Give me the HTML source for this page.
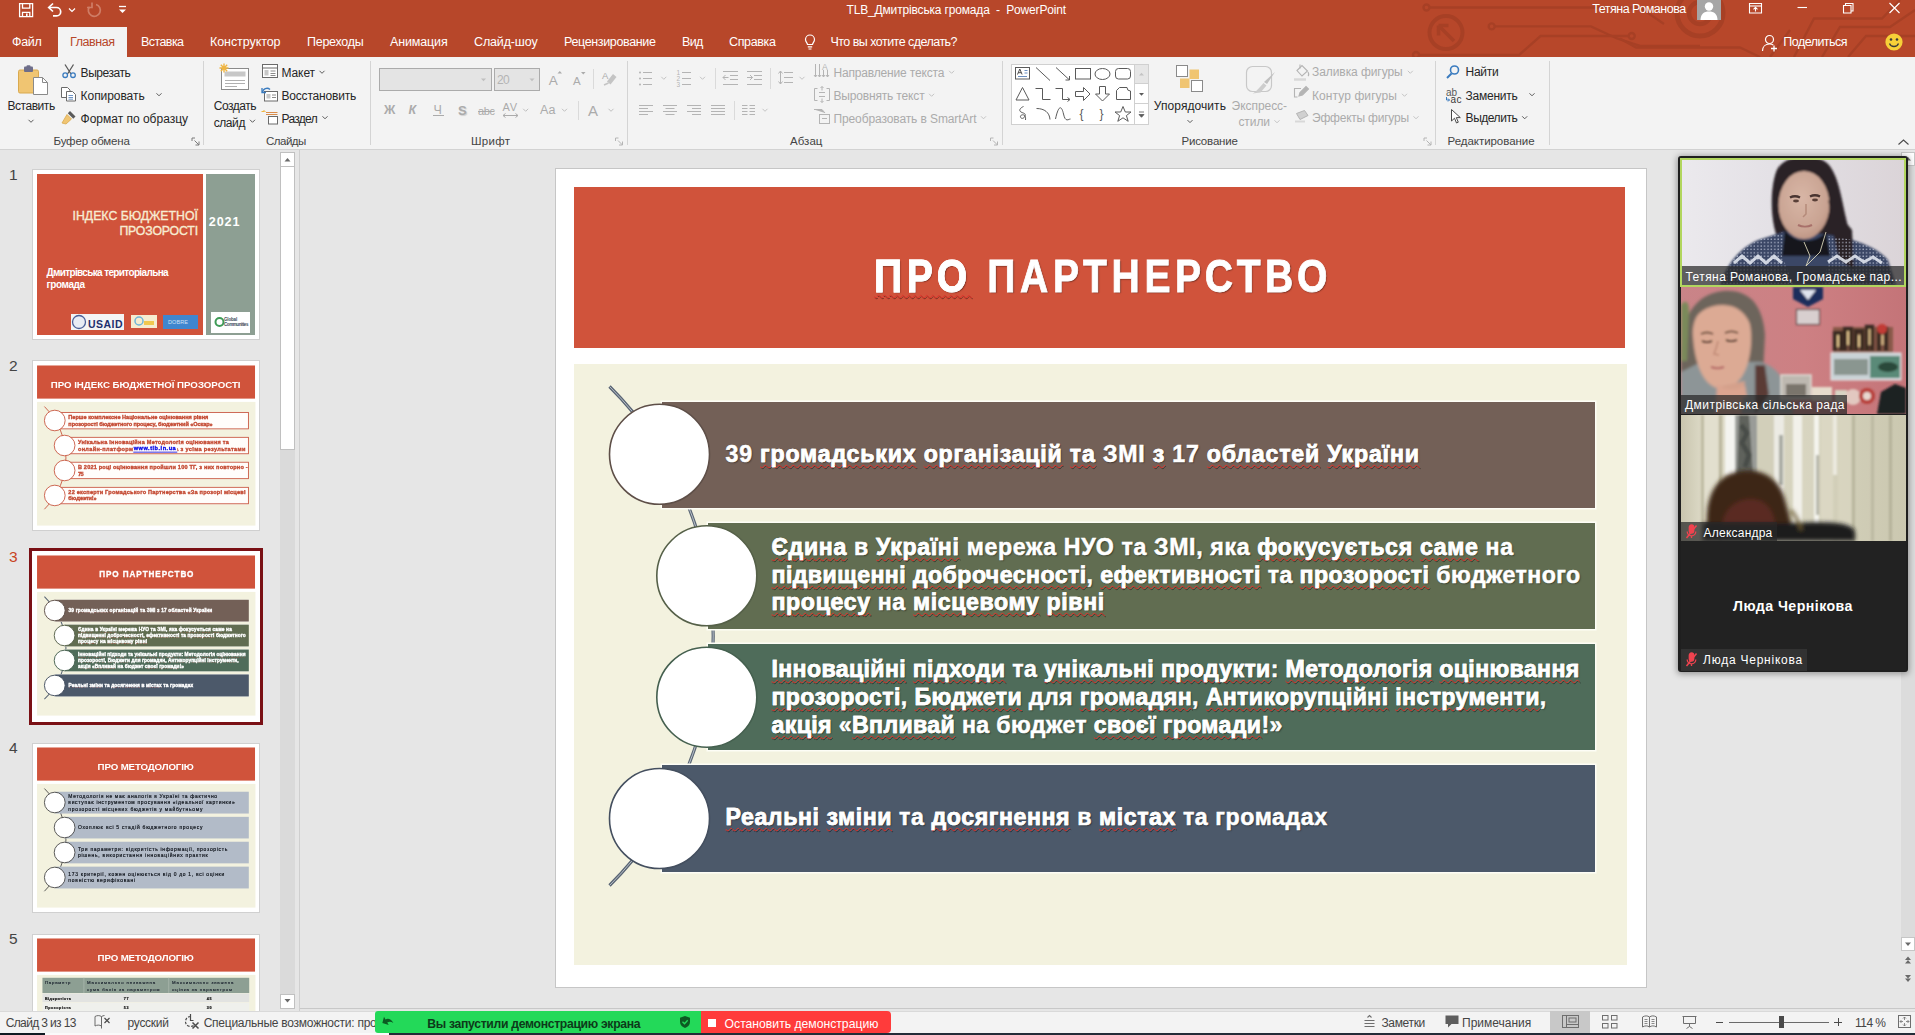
<!DOCTYPE html>
<html lang="ru">
<head>
<meta charset="utf-8">
<title>TLB_Дмитрівська громада - PowerPoint</title>
<style>
*{box-sizing:border-box;margin:0;padding:0}
html,body{width:1915px;height:1035px;overflow:hidden;background:#e6e6e6;font-family:"Liberation Sans","DejaVu Sans",sans-serif;}
.a{position:absolute;white-space:nowrap}
svg.a{overflow:visible}
#app{position:relative;width:1915px;height:1035px;overflow:hidden;background:linear-gradient(#b7472a 0,#b7472a 57px,#f3f3f3 57px,#f3f3f3 149px,#d2d2d2 149px,#d2d2d2 150px,#e6e6e6 150px)}
.a{white-space:pre}
u{text-decoration:underline wavy #e0332b;text-decoration-thickness:1px;text-underline-offset:1.5px;text-decoration-skip-ink:none}

</style>
</head>
<body>
<div id="app">
<!-- p_title -->
<svg class="a" style="left:0.0px;top:0.0px;overflow:hidden;" width="1915" height="57" viewBox="0 0 1915 57"><g fill="none" stroke="#a53f25" stroke-width="2.4" opacity="0.85">
<circle cx="1426.5" cy="7.5" r="3"/><path d="M1430 7.5H1640L1664 24"/>
<circle cx="1446" cy="32.600" r="16.500" stroke-width="4"/>
<path d="M1439 26L1454 41M1438.500 25.500h10M1438.500 25.500v10" stroke-width="3.600"/>
<circle cx="1491.700" cy="26.400" r="3"/><path d="M1495 26.400H1591L1617 38.500L1640 46H1700"/>
<circle cx="1631.700" cy="36" r="3"/><path d="M1628.500 36H1540.500L1519 55H1419"/><circle cx="1416" cy="55" r="3"/>
<circle cx="1700" cy="13" r="23" stroke-width="5"/>
<circle cx="1700" cy="13" r="11" stroke-width="4.500"/>
<path d="M1620 38.500L1636 47.500H1740L1760 57"/>
<path d="M1794 57L1814 18.500H1882L1900 0"/>
<path d="M1822 57L1840 27H1890L1915 10"/>
<path d="M1848 57L1866 36H1915"/>
<path d="M1770 57L1790 30"/>
</g></svg>
<svg class="a" style="left:0.0px;top:0.0px;" width="140" height="24" viewBox="0 0 140 24"><g fill="none" stroke="#fff" stroke-width="1.3">
<path d="M19.6 3.6h13v13h-13z"/><path d="M22.5 3.6v4.5h7.3V3.6M22.5 16.6v-4.2h7.3v4.2" />
<path d="M26.8 13.5v3" stroke-width="1.6"/>
<path d="M49 7.5h7.5a4.2 4.2 0 0 1 0 8.4H53" stroke-width="1.7"/><path d="M53 3.5L48.7 7.5L53 11.5" stroke-width="1.7"/>
<path d="M69 8.5l3 3l3-3" stroke-width="1.2"/>
<g stroke="#cf7d66" transform="translate(-1.5,-.5)"><path d="M97.5 5a6 6 0 1 1 -6.5 2.2" stroke-width="1.7"/><path d="M93.5 3v5h-5" stroke-width="1.7"/></g>
<path d="M119 6.5h7" stroke-width="1.3"/><path d="M119 9.5h7l-3.5 3.6z" fill="#fff" stroke="none"/>
</g></svg>
<div class="a" style="left:846.5px;top:3.8px;font-size:12px;line-height:12px;color:#ffffff;letter-spacing:-0.162px;">TLB_Дмитрівська громада  -  PowerPoint</div>
<div class="a" style="left:1592.3px;top:3.4px;font-size:12.5px;line-height:12.5px;color:#ffffff;letter-spacing:-0.506px;">Тетяна Романова</div>
<div class="a" style="left:1697.0px;top:0.0px;width:24.0px;height:20.0px;background:#a6a6a6;"></div>
<svg class="a" style="left:1697.0px;top:0.0px;" width="24" height="20" viewBox="0 0 24 20"><circle cx="12" cy="6.5" r="4.2" fill="#fff"/><path d="M3.5 20c0-6 3.5-8.5 8.5-8.5s8.5 2.500 8.500 8.500z" fill="#fff"/></svg>
<svg class="a" style="left:0.0px;top:0.0px;" width="1915" height="20" viewBox="0 0 1915 20"><g fill="none" stroke="#fff" stroke-width="1.1">
<path d="M1749.5 3.500h12v9.500h-12z"/><path d="M1749.500 6h12"/><path d="M1755.500 11.500v-4M1753.500 9.300l2-2l2 2"/>
<path d="M1797.500 7.500h9.500"/>
<path d="M1843.500 5.500h7.500v7.500h-7.500z"/><path d="M1845.500 5.500v-2h7.500v7.500h-2"/>
<path d="M1889.500 3l10 10M1899.500 3l-10 10" stroke-width="1.200"/>
</g></svg>
<div class="a" style="left:58.0px;top:27.0px;width:69.0px;height:31.0px;background:#f3f3f3;"></div>
<div class="a" style="left:12.0px;top:36.4px;font-size:12.5px;line-height:12.5px;color:#ffffff;letter-spacing:-0.308px;">Файл</div>
<div class="a" style="left:70.0px;top:36.4px;font-size:12.5px;line-height:12.5px;color:#b7472a;letter-spacing:-0.440px;">Главная</div>
<div class="a" style="left:141.0px;top:36.4px;font-size:12.5px;line-height:12.5px;color:#ffffff;letter-spacing:-0.566px;">Вставка</div>
<div class="a" style="left:210.0px;top:36.4px;font-size:12.5px;line-height:12.5px;color:#ffffff;letter-spacing:-0.070px;">Конструктор</div>
<div class="a" style="left:307.0px;top:36.4px;font-size:12.5px;line-height:12.5px;color:#ffffff;letter-spacing:-0.266px;">Переходы</div>
<div class="a" style="left:390.0px;top:36.4px;font-size:12.5px;line-height:12.5px;color:#ffffff;letter-spacing:-0.147px;">Анимация</div>
<div class="a" style="left:474.0px;top:36.4px;font-size:12.5px;line-height:12.5px;color:#ffffff;letter-spacing:-0.145px;">Слайд-шоу</div>
<div class="a" style="left:564.0px;top:36.4px;font-size:12.5px;line-height:12.5px;color:#ffffff;letter-spacing:-0.359px;">Рецензирование</div>
<div class="a" style="left:682.0px;top:36.4px;font-size:12.5px;line-height:12.5px;color:#ffffff;letter-spacing:-0.705px;">Вид</div>
<div class="a" style="left:729.0px;top:36.4px;font-size:12.5px;line-height:12.5px;color:#ffffff;letter-spacing:-0.362px;">Справка</div>
<div class="a" style="left:830.5px;top:36.4px;font-size:12.5px;line-height:12.5px;color:#ffffff;letter-spacing:-0.531px;">Что вы хотите сделать?</div>
<svg class="a" style="left:802.0px;top:33.0px;" width="16" height="18" viewBox="0 0 16 18"><g fill="none" stroke="#fff" stroke-width="1.2"><path d="M5.500 11.500c0-1.500-2-2.500-2-5a4.500 4.500 0 0 1 9 0c0 2.500-2 3.500-2 5z"/><path d="M5.800 13.800h4.400M6.500 16h3"/></g></svg>
<svg class="a" style="left:1760.0px;top:33.0px;" width="20" height="20" viewBox="0 0 20 20"><g fill="none" stroke="#fff" stroke-width="1.200"><circle cx="9.500" cy="6.500" r="4"/><path d="M2.500 18c0-4.500 3-7 7-7c1.500 0 2.800.3 3.800 1"/><path d="M14 12.500v6M11 15.500h6" stroke-width="1.300"/></g></svg>
<div class="a" style="left:1783.3px;top:36.4px;font-size:12.5px;line-height:12.5px;color:#ffffff;letter-spacing:-0.533px;">Поделиться</div>
<svg class="a" style="left:1884.0px;top:32.0px;" width="20" height="20" viewBox="0 0 20 20"><circle cx="10" cy="10" r="8.600" fill="#f7d038"/><circle cx="7" cy="7.500" r="1.300" fill="#3a3a3a"/><circle cx="13" cy="7.500" r="1.300" fill="#3a3a3a"/><path d="M5.500 11.500c1.500 4 7.500 4 9 0" fill="none" stroke="#3a3a3a" stroke-width="1.300"/></svg>
<!-- p_ribbon -->
<div class="a" style="left:202.5px;top:61.0px;width:1.0px;height:84.0px;background:#d4d4d4;"></div>
<div class="a" style="left:370.0px;top:61.0px;width:1.0px;height:84.0px;background:#d4d4d4;"></div>
<div class="a" style="left:626.5px;top:61.0px;width:1.0px;height:84.0px;background:#d4d4d4;"></div>
<div class="a" style="left:1002.0px;top:61.0px;width:1.0px;height:84.0px;background:#d4d4d4;"></div>
<div class="a" style="left:1434.5px;top:61.0px;width:1.0px;height:84.0px;background:#d4d4d4;"></div>
<div class="a" style="left:1548.5px;top:61.0px;width:1.0px;height:84.0px;background:#d4d4d4;"></div>
<div class="a" style="left:7.5px;top:100.3px;font-size:12px;line-height:12px;color:#262626;letter-spacing:-0.458px;">Вставить</div>
<div class="a" style="left:80.6px;top:66.8px;font-size:12px;line-height:12px;color:#262626;letter-spacing:-0.447px;">Вырезать</div>
<div class="a" style="left:80.6px;top:89.8px;font-size:12px;line-height:12px;color:#262626;letter-spacing:-0.061px;">Копировать</div>
<div class="a" style="left:80.6px;top:112.5px;font-size:12px;line-height:12px;color:#262626;letter-spacing:-0.012px;">Формат по образцу</div>
<div class="a" style="left:53.5px;top:135.9px;font-size:11.5px;line-height:11.5px;color:#444444;letter-spacing:-0.154px;">Буфер обмена</div>
<div class="a" style="left:213.7px;top:100.3px;font-size:12px;line-height:12px;color:#262626;letter-spacing:-0.472px;">Создать</div>
<div class="a" style="left:213.7px;top:116.6px;font-size:12px;line-height:12px;color:#262626;letter-spacing:-0.416px;">слайд</div>
<div class="a" style="left:281.5px;top:66.8px;font-size:12px;line-height:12px;color:#262626;letter-spacing:-0.093px;">Макет</div>
<div class="a" style="left:281.5px;top:89.8px;font-size:12px;line-height:12px;color:#262626;letter-spacing:-0.195px;">Восстановить</div>
<div class="a" style="left:281.5px;top:112.5px;font-size:12px;line-height:12px;color:#262626;letter-spacing:-0.694px;">Раздел</div>
<div class="a" style="left:266.0px;top:135.9px;font-size:11.5px;line-height:11.5px;color:#444444;letter-spacing:-0.502px;">Слайды</div>
<div class="a" style="left:379.0px;top:68.0px;width:113.0px;height:23.0px;background:#e4e4e4;border:1px solid #ababab;"></div>
<div class="a" style="left:494.0px;top:68.0px;width:46.0px;height:23.0px;background:#e4e4e4;border:1px solid #ababab;"></div>
<div class="a" style="left:497.0px;top:73.8px;font-size:12px;line-height:12px;color:#b4b4b4;letter-spacing:-0.674px;">20</div>
<div class="a" style="left:548.8px;top:73.8px;font-size:13.5px;line-height:13.5px;color:#ababab;letter-spacing:0.195px;">A</div>
<div class="a" style="left:573.0px;top:75.5px;font-size:11.5px;line-height:11.5px;color:#ababab;letter-spacing:0.329px;">A</div>
<div class="a" style="left:592.5px;top:69.0px;width:1.0px;height:20.0px;background:#dadada;"></div>
<div class="a" style="left:602.0px;top:70.5px;font-size:9.5px;line-height:9.5px;color:#ababab;letter-spacing:-0.337px;">A</div>
<div class="a" style="left:384.0px;top:104.4px;font-size:12.5px;line-height:12.5px;color:#ababab;letter-spacing:1.702px;font-weight:bold;">Ж</div>
<div class="a" style="left:408.6px;top:104.4px;font-size:12.5px;line-height:12.5px;color:#ababab;letter-spacing:1.215px;font-weight:bold;font-style:italic;">К</div>
<div class="a" style="left:433.5px;top:103.9px;font-size:12.5px;line-height:12.5px;color:#ababab;letter-spacing:0.669px;">Ч</div>
<div class="a" style="left:432.5px;top:115.0px;width:11.0px;height:1.0px;background:#ababab;"></div>
<div class="a" style="left:458.0px;top:104.3px;font-size:13px;line-height:13px;color:#ababab;letter-spacing:-0.671px;font-weight:bold;text-shadow:1px 1px 1px #cfcfcf;">S</div>
<div class="a" style="left:478.0px;top:105.5px;font-size:11px;line-height:11px;color:#ababab;letter-spacing:-0.412px;text-decoration:line-through;">abc</div>
<div class="a" style="left:502.5px;top:102.2px;font-size:11px;line-height:11px;color:#ababab;letter-spacing:0.821px;">AV</div>
<div class="a" style="left:540.0px;top:104.4px;font-size:12.5px;line-height:12.5px;color:#ababab;letter-spacing:0.105px;">Aa</div>
<div class="a" style="left:578.0px;top:101.0px;width:1.0px;height:19.0px;background:#dadada;"></div>
<div class="a" style="left:588.0px;top:103.3px;font-size:15px;line-height:15px;color:#ababab;letter-spacing:0.495px;">A</div>
<div class="a" style="left:471.0px;top:135.9px;font-size:11.5px;line-height:11.5px;color:#444444;letter-spacing:0.293px;">Шрифт</div>
<div class="a" style="left:676.5px;top:70.1px;font-size:6.5px;line-height:6.5px;color:#b4b4b4;letter-spacing:0.000px;">1</div>
<div class="a" style="left:676.5px;top:76.1px;font-size:6.5px;line-height:6.5px;color:#b4b4b4;letter-spacing:0.000px;">2</div>
<div class="a" style="left:676.5px;top:82.1px;font-size:6.5px;line-height:6.5px;color:#b4b4b4;letter-spacing:0.000px;">3</div>
<div class="a" style="left:715.0px;top:68.0px;width:1.0px;height:21.0px;background:#dadada;"></div>
<div class="a" style="left:770.0px;top:68.0px;width:1.0px;height:21.0px;background:#dadada;"></div>
<div class="a" style="left:733.5px;top:101.0px;width:1.0px;height:19.0px;background:#dadada;"></div>
<div class="a" style="left:822.0px;top:62.8px;font-size:8.5px;line-height:8.5px;color:#b4b4b4;letter-spacing:0.330px;">A</div>
<div class="a" style="left:833.4px;top:66.8px;font-size:12px;line-height:12px;color:#ababab;letter-spacing:-0.159px;">Направление текста</div>
<div class="a" style="left:833.4px;top:89.8px;font-size:12px;line-height:12px;color:#ababab;letter-spacing:-0.158px;">Выровнять текст</div>
<div class="a" style="left:833.4px;top:112.5px;font-size:12px;line-height:12px;color:#ababab;letter-spacing:-0.102px;">Преобразовать в SmartArt</div>
<div class="a" style="left:790.0px;top:135.9px;font-size:11.5px;line-height:11.5px;color:#444444;letter-spacing:0.048px;">Абзац</div>
<div class="a" style="left:1011.0px;top:64.0px;width:138.0px;height:60.5px;background:#ffffff;border:1px solid #d0d0d0;"></div>
<div class="a" style="left:1134.0px;top:64.0px;width:15.0px;height:20.0px;background:#e6e6e6;border:1px solid #d0d0d0;"></div>
<div class="a" style="left:1134.0px;top:84.0px;width:15.0px;height:20.0px;background:#ffffff;border:1px solid #d0d0d0;border-top:0;"></div>
<div class="a" style="left:1134.0px;top:104.0px;width:15.0px;height:20.5px;background:#ffffff;border:1px solid #d0d0d0;border-top:0;"></div>
<div class="a" style="left:1079.5px;top:108.3px;font-size:12px;line-height:12px;color:#5a5a5a;letter-spacing:0.000px;">{</div>
<div class="a" style="left:1099.5px;top:108.3px;font-size:12px;line-height:12px;color:#5a5a5a;letter-spacing:0.000px;">}</div>
<div class="a" style="left:1153.8px;top:100.3px;font-size:12px;line-height:12px;color:#262626;letter-spacing:0.072px;">Упорядочить</div>
<div class="a" style="left:1231.6px;top:100.3px;font-size:12px;line-height:12px;color:#ababab;letter-spacing:-0.050px;">Экспресс-</div>
<div class="a" style="left:1238.4px;top:116.1px;font-size:12px;line-height:12px;color:#ababab;letter-spacing:-0.061px;">стили</div>
<div class="a" style="left:1181.4px;top:135.9px;font-size:11.5px;line-height:11.5px;color:#444444;letter-spacing:-0.169px;">Рисование</div>
<div class="a" style="left:1312.0px;top:66.4px;font-size:12px;line-height:12px;color:#ababab;letter-spacing:-0.074px;">Заливка фигуры</div>
<div class="a" style="left:1312.0px;top:89.6px;font-size:12px;line-height:12px;color:#ababab;letter-spacing:0.084px;">Контур фигуры</div>
<div class="a" style="left:1312.0px;top:112.3px;font-size:12px;line-height:12px;color:#ababab;letter-spacing:-0.229px;">Эффекты фигуры</div>
<div class="a" style="left:1465.6px;top:66.4px;font-size:12px;line-height:12px;color:#262626;letter-spacing:-0.309px;">Найти</div>
<div class="a" style="left:1446.0px;top:87.5px;font-size:10px;line-height:10px;color:#5a5a5a;letter-spacing:-0.062px;">ab</div>
<div class="a" style="left:1450.5px;top:94.5px;font-size:10px;line-height:10px;color:#3a3a3a;letter-spacing:0.319px;">ac</div>
<div class="a" style="left:1465.6px;top:89.6px;font-size:12px;line-height:12px;color:#262626;letter-spacing:-0.241px;">Заменить</div>
<div class="a" style="left:1465.6px;top:112.3px;font-size:12px;line-height:12px;color:#262626;letter-spacing:-0.470px;">Выделить</div>
<div class="a" style="left:1447.6px;top:135.9px;font-size:11.5px;line-height:11.5px;color:#444444;letter-spacing:-0.050px;">Редактирование</div>
<svg class="a" style="left:0.0px;top:0.0px;" width="1915" height="150" viewBox="0 0 1915 150"><g>
<rect x="18.500" y="70" width="20" height="23" rx="1.500" fill="#f0c572" stroke="#d9a94e" stroke-width="1"/>
<rect x="24" y="66.500" width="9" height="5.500" rx="1" fill="#6e6e8a"/><rect x="26.500" y="65.200" width="4" height="2.600" rx="1" fill="#6e6e8a"/>
<path d="M33.500 77.500h9l5 5v12h-14z" fill="#fff" stroke="#8a8a8a" stroke-width="1"/><path d="M42.500 77.500v5h5" fill="none" stroke="#8a8a8a" stroke-width="1"/>
</g><path d="M28.5 119.8l2.500 2.500l2.500-2.500" fill="none" stroke="#5a5a5a" stroke-width="1"/><g fill="none" stroke-width="1.300"><path d="M65 64.500l6 9.500M73.500 64.500l-6 9.500" stroke="#5a5a5a"/><circle cx="65.200" cy="75.200" r="2.300" stroke="#3a7bbf"/><circle cx="73" cy="75.200" r="2.300" stroke="#3a7bbf"/></g><g fill="#fff" stroke="#6a6a6a" stroke-width="1"><path d="M61.500 87.500h6l2.500 2.500v7.500h-8.500z"/><path d="M66.500 91.500h6l3 3v6.500h-9z"/><path d="M68.500 95.500h4.500M68.500 97.500h4.500M68.500 99.200h4.500" stroke="#4a7ab5" stroke-width=".8"/></g><path d="M156.5 93.3l2.500 2.500l2.500-2.500" fill="none" stroke="#5a5a5a" stroke-width="1"/><g><path d="M70 111l5.500 5.500l-2.200 2.200l-5.500-5.500z" fill="#5a5a5a"/><path d="M67 114.500l4.500 4.500l-5.500 5l-4-1z" fill="#f0c572" stroke="#d9a94e" stroke-width=".8"/></g><g fill="none" stroke="#7a7a7a" stroke-width="1"><path d="M192 141V138h3"/><path d="M194.5 140.5l4.500 4.500M199 141.5v3.500h-3.500"/></g><g><rect x="221.500" y="68.500" width="27" height="21" fill="#fff" stroke="#8a8a8a"/><rect x="224.500" y="71.500" width="21" height="5" fill="#c8c8c8"/><path d="M225 80.500h20M225 83.500h20M225 86.500h12" stroke="#b0b0b0" stroke-width="1"/>
<g stroke="#f0b540" stroke-width="1.400"><path d="M224 63.500v9M219.500 68h9M220.800 64.800l6.400 6.400M227.200 64.800l-6.400 6.400"/></g></g><path d="M250.0 119.8l2.500 2.500l2.500-2.500" fill="none" stroke="#5a5a5a" stroke-width="1"/><g fill="none" stroke="#6a6a6a" stroke-width="1"><rect x="262.500" y="64.500" width="15" height="13" fill="#fff"/><path d="M262.500 68h15"/><rect x="264.500" y="70" width="4" height="5.500" fill="#c8c8c8" stroke="none"/><path d="M270.500 71h5M270.500 73.500h5M270.500 75.500h5" stroke="#8a8a8a"/></g><path d="M319.5 70.8l2.500 2.500l2.500-2.500" fill="none" stroke="#5a5a5a" stroke-width="1"/><g fill="none" stroke="#6a6a6a" stroke-width="1"><rect x="264.500" y="91.500" width="13" height="9.500" fill="#fff"/><rect x="266.500" y="94" width="4" height="4.500" fill="#c8c8c8" stroke="none"/><path d="M272 95h4M272 97.500h4" stroke="#8a8a8a"/><path d="M262.500 92.500a4.500 4.500 0 0 1 7.500-3" stroke="#3a7bbf" stroke-width="1.400"/><path d="M262 88v4.500h4" stroke="#3a7bbf" stroke-width="1.300"/></g><g fill="none" stroke="#6a6a6a" stroke-width="1"><rect x="268.500" y="116.500" width="9" height="7.500" fill="#fff"/><path d="M266 112.500h11.500M266 114.500h11.500" stroke="#d98c4a"/><path d="M263.500 110l2 2M261.500 111.500h3" stroke="#f0b540"/></g><path d="M322.5 116.3l2.500 2.500l2.500-2.500" fill="none" stroke="#5a5a5a" stroke-width="1"/><path d="M481 78.500h5l-2.500 2.800z" fill="#c0c0c0"/><path d="M529.500 78.500h5l-2.500 2.800z" fill="#c0c0c0"/><path d="M557.500 73.500h4.500l-2.200-2.600z" fill="#ababab"/><path d="M581 72h4.500l-2.200 2.600z" fill="#ababab"/><path d="M607 81.500l6-7.500l3.500 3l-6 7.500z" fill="#c4c4c4"/><path d="M604 85l4.500-2" stroke="#c4c4c4" stroke-width="1.500"/><path d="M503 115.500h15M503 115.500l2.500-2M503 115.500l2.500 2M518 115.500l-2.500-2M518 115.500l-2.500 2" stroke="#ababab" fill="none"/><path d="M523.2 108.8l2.500 2.500l2.500-2.500" fill="none" stroke="#c0c0c0" stroke-width="1"/><path d="M562.0 108.8l2.500 2.500l2.500-2.500" fill="none" stroke="#c0c0c0" stroke-width="1"/><path d="M608.5 108.8l2.500 2.500l2.500-2.500" fill="none" stroke="#c0c0c0" stroke-width="1"/><g fill="none" stroke="#b4b4b4" stroke-width="1"><path d="M615.5 141V138h3"/><path d="M618.0 140.5l4.500 4.500M622.5 141.5v3.500h-3.500"/></g><g stroke="#b4b4b4" fill="none" stroke-width="1"><path d="M643 72.5h9"/><circle cx="640" cy="72.5" r="1" fill="#b4b4b4" stroke="none"/><path d="M643 78.5h9"/><circle cx="640" cy="78.5" r="1" fill="#b4b4b4" stroke="none"/><path d="M643 84.5h9"/><circle cx="640" cy="84.5" r="1" fill="#b4b4b4" stroke="none"/><path d="M682 72.5h9"/><path d="M682 78.5h9"/><path d="M682 84.5h9"/><path d="M723 71.500h15M730 75.500h8M730 79.500h8M723 84.500h15M728.500 77.500h-5.500M725.500 75l-2.500 2.500l2.500 2.500"/><path d="M747 71.500h15M754 75.500h8M754 79.500h8M747 84.500h15M747 77.500h5.500M750 75l2.500 2.500l-2.500 2.500"/><path d="M784 72.500h9M784 77.500h9M784 82.500h9M780.500 71v13M778.500 73.500l2-2.500l2 2.500M778.500 81.500l2 2.500l2-2.500"/><path d="M639 105.5h14"/><path d="M639 108.5h9"/><path d="M639 111.5h14"/><path d="M639 114.5h9"/><path d="M663.0 105.5h14"/><path d="M665.5 108.5h9"/><path d="M663.0 111.5h14"/><path d="M665.5 114.5h9"/><path d="M687 105.5h14"/><path d="M692 108.5h9"/><path d="M687 111.5h14"/><path d="M692 114.5h9"/><path d="M711 105.5h14"/><path d="M711 108.5h14"/><path d="M711 111.5h14"/><path d="M711 114.5h14"/><path d="M742 105.5h5.500M749.500 105.5h5.500"/><path d="M742 108.5h5.500M749.500 108.5h5.500"/><path d="M742 111.5h5.500M749.500 111.5h5.500"/><path d="M742 114.5h5.500M749.500 114.5h5.500"/></g><path d="M661.3 76.8l2.500 2.500l2.500-2.500" fill="none" stroke="#c4c4c4" stroke-width="1"/><path d="M700.0 76.8l2.500 2.500l2.500-2.500" fill="none" stroke="#c4c4c4" stroke-width="1"/><path d="M799.5 76.8l2.500 2.500l2.500-2.500" fill="none" stroke="#c4c4c4" stroke-width="1"/><path d="M762.5 108.8l2.500 2.500l2.500-2.500" fill="none" stroke="#c4c4c4" stroke-width="1"/><g stroke="#b4b4b4" fill="none" stroke-width="1"><path d="M815.500 64v13M819.500 64v13M823.500 70v7M827.500 70v7M814 75l1.500 2l1.500-2M818 75l1.500 2l1.500-2M822 75l1.500 2l1.500-2M826 75l1.500 2l1.500-2"/></g><path d="M949.1 70.8l2.500 2.500l2.500-2.500" fill="none" stroke="#c4c4c4" stroke-width="1"/><g stroke="#b4b4b4" fill="none" stroke-width="1"><path d="M817.500 88.500h-3v12h3M826.500 88.500h3v12h-3M819 92.500h6M819 96.500h6M822 86.500v4M820.500 88l1.500-1.500l1.500 1.500M822 98.500v4M820.500 101l1.500 1.500l1.500-1.500"/></g><path d="M929.1 93.8l2.500 2.500l2.500-2.500" fill="none" stroke="#c4c4c4" stroke-width="1"/><g stroke="#b4b4b4" fill="none" stroke-width="1"><path d="M814 109.500h8l3 3.500" fill="#b4b4b4"/><rect x="819.500" y="114.500" width="10" height="9" fill="#f3f3f3"/><path d="M822 118.500h5"/></g><path d="M981.0 116.3l2.500 2.500l2.500-2.500" fill="none" stroke="#c4c4c4" stroke-width="1"/><g fill="none" stroke="#b4b4b4" stroke-width="1"><path d="M990.5 141V138h3"/><path d="M993.0 140.5l4.500 4.500M997.5 141.5v3.500h-3.500"/></g><path d="M1139 75.500h5l-2.500-2.800z" fill="#c4c4c4"/><path d="M1139 93h5l-2.500 2.800z" fill="#5a5a5a"/><path d="M1139 112h5M1139 114.500h5l-2.500 2.800z" fill="#5a5a5a" stroke="#5a5a5a" stroke-width=".8"/><g stroke="#5a5a5a" fill="none" stroke-width="1"><rect x="1015.500" y="67.500" width="14" height="11.500"/><path d="M1018 76.500h9M1024.500 70.500h3M1024.500 73h3" stroke="#6a8ec0"/><path d="M1017.500 74.500l2.300-5.500l2.300 5.500M1018.400 72.700h2.800" stroke="#3a3a3a" stroke-width=".9"/><path d="M1036 67.500l14 13M1056 67.500l13 12M1069.500 76v4h-4"/><rect x="1075.500" y="68.500" width="15" height="10.500"/><ellipse cx="1102.500" cy="74" rx="7.500" ry="5.500"/><rect x="1115.500" y="68.500" width="15" height="10.500" rx="3"/><path d="M1022.500 87.500l6.500 12.500h-13z"/><path d="M1035.500 88.500h7v11h8"/><path d="M1055.500 88.500h7v11h7M1067.500 97.500l2.500 2l-2.500 2"/><path d="M1075.500 91.500h8v-4l6.500 6.500l-6.500 6.500v-4h-8z"/><path d="M1099.500 86.500h6v7.500h4l-7 7l-7-7h4z"/><path d="M1116.500 99.500v-9l3-3h7.500a3.500 3.500 0 0 0 3.500 3.500v8.500z"/><path d="M1023.500 106.500c-3.500 1.500-5 4-2.500 5.500s5 1 4 4s-4 3-4.500 1s2.500-3 4-1.500s1 3 1 4.500"/><path d="M1036.500 108.500c8 0 13 4 13.500 11"/><path d="M1055.500 119c3-14 6-14 8-5s5 5 7 5"/><path d="M1123 106.500l2.300 5.500h5.700l-4.600 3.600l1.800 5.700l-5.200-3.500l-5.200 3.500l1.800-5.700l-4.600-3.600h5.700z"/></g><rect x="1176.500" y="65.500" width="11" height="11" fill="#fff" stroke="#8a8a8a"/><rect x="1189.500" y="69.500" width="9.500" height="9.500" fill="#f0c572"/><rect x="1180" y="78.500" width="9.500" height="9.500" fill="#f0c572"/><rect x="1191.500" y="80.500" width="11" height="11" fill="#fff" stroke="#8a8a8a"/><path d="M1187.5 120.1l2.500 2.500l2.500-2.500" fill="none" stroke="#5a5a5a" stroke-width="1"/><rect x="1246.500" y="66.500" width="25" height="25" rx="6" fill="#f3f3f3" stroke="#c8c8c8" stroke-width="1.200"/><path d="M1275 72l-8 12l-3-2z" fill="#c0c0c0"/><path d="M1263.500 83l3 2.500l-6 7l-8 1c4-2 6-5 11-10.500z" fill="#cdcdcd"/><path d="M1274.5 120.3l2.500 2.500l2.500-2.500" fill="none" stroke="#c4c4c4" stroke-width="1"/><g fill="none" stroke="#b4b4b4" stroke-width="1.100"><path d="M1297 70.500l5-5l5.500 5.500l-5.500 5z"/><path d="M1300 64.500v4"/><path d="M1308 72c1 2 1.500 3 0 4" /><path d="M1294 79.500h12" stroke="#d8d8d8" stroke-width="2.500"/></g><path d="M1407.8 70.8l2.500 2.500l2.500-2.500" fill="none" stroke="#c4c4c4" stroke-width="1"/><g fill="none" stroke="#b4b4b4" stroke-width="1.100"><path d="M1301 88.500h-6.500v8.500h3"/><path d="M1299 96l1-3.500l6-6l2.500 2.500l-6 6z" fill="#b4b4b4"/></g><path d="M1402.0 93.8l2.500 2.500l2.500-2.500" fill="none" stroke="#c4c4c4" stroke-width="1"/><path d="M1296.500 113.500l8-3l3.500 5l-8 4z" fill="#d0d0d0" stroke="#b4b4b4"/><path d="M1295 121.500h10" stroke="#d8d8d8" stroke-width="2"/><path d="M1413.5 116.3l2.500 2.500l2.500-2.500" fill="none" stroke="#c4c4c4" stroke-width="1"/><g fill="none" stroke="#b4b4b4" stroke-width="1"><path d="M1424 141V138h3"/><path d="M1426.5 140.5l4.500 4.500M1431 141.5v3.500h-3.500"/></g><g fill="none"><circle cx="1454.500" cy="70" r="4" stroke="#3a7bbf" stroke-width="1.600"/><path d="M1451.500 73.500l-4.500 4.500" stroke="#3a7bbf" stroke-width="2"/></g><path d="M1446.500 97v3h3M1448 98.500l1.500 1.500l-1.500 1.500" fill="none" stroke="#3a7bbf" stroke-width="1"/><path d="M1529.5 93.3l2.500 2.500l2.500-2.500" fill="none" stroke="#5a5a5a" stroke-width="1"/><path d="M1451.500 109.500v11.500l3-2.800l2 4.800l1.800-.8l-2-4.600h4z" fill="#fff" stroke="#4a4a4a" stroke-width="1"/><path d="M1522.2 116.3l2.500 2.500l2.500-2.500" fill="none" stroke="#5a5a5a" stroke-width="1"/><path d="M1898.500 144.500l5-4.500l5 4.500" fill="none" stroke="#4a4a4a" stroke-width="1.100"/></svg>
<!-- p_thumbs -->
<div class="a" style="left:299.0px;top:150.0px;width:1.0px;height:861.0px;background:#cfcfcf;"></div>
<div class="a" style="left:280.0px;top:152.0px;width:15.0px;height:857.0px;background:#dadada;"></div>
<div class="a" style="left:280.0px;top:152.0px;width:15.0px;height:15.0px;background:#ffffff;border:1px solid #c0c0c0;"></div>
<div class="a" style="left:280.0px;top:166.0px;width:15.0px;height:284.0px;background:#ffffff;border:1px solid #c0c0c0;"></div>
<div class="a" style="left:280.0px;top:994.0px;width:15.0px;height:15.0px;background:#ffffff;border:1px solid #c0c0c0;"></div>
<svg class="a" style="left:280.0px;top:150.0px;" width="16" height="861" viewBox="0 0 16 861"><path d="M4.500 11.500h6l-3-3.500z" fill="#6a6a6a"/><path d="M4.500 849h6l-3 3.500z" fill="#6a6a6a"/></svg>
<div class="a" style="left:32.0px;top:169.0px;width:228.0px;height:171.0px;background:#ffffff;border:1px solid #d0d0d0;"></div>
<div class="a" style="left:37.0px;top:174.0px;width:166.0px;height:161.0px;background:#d0533b;"></div>
<div class="a" style="left:206.0px;top:174.0px;width:49.0px;height:161.0px;background:#8d9f93;"></div>
<div class="a" style="left:72.5px;top:209.6px;font-size:12.3px;line-height:12.3px;color:#f7ecd2;letter-spacing:0.007px;-webkit-text-stroke:.35px #f7ecd2;">ІНДЕКС БЮДЖЕТНОЇ</div>
<div class="a" style="left:119.4px;top:225.2px;font-size:12.3px;line-height:12.3px;color:#f7ecd2;letter-spacing:-0.151px;-webkit-text-stroke:.35px #f7ecd2;">ПРОЗОРОСТІ</div>
<div class="a" style="left:208.7px;top:216.3px;font-size:12.6px;line-height:12.6px;color:#fff;letter-spacing:0.942px;font-weight:bold;">2021</div>
<div class="a" style="left:46.4px;top:268.0px;font-size:10px;line-height:10px;color:#fff;letter-spacing:-0.638px;font-weight:bold;">Дмитрівська територіальна</div>
<div class="a" style="left:46.4px;top:279.5px;font-size:10px;line-height:10px;color:#fff;letter-spacing:-0.370px;font-weight:bold;">громада</div>
<div class="a" style="left:71.0px;top:314.0px;width:53.0px;height:16.0px;background:#f4f4f4;"></div>
<svg class="a" style="left:71.0px;top:314.0px;" width="16" height="16" viewBox="0 0 16 16"><circle cx="8" cy="8" r="6.500" fill="#e8ecf4" stroke="#4a5f98" stroke-width="1.300"/></svg>
<div class="a" style="left:88.0px;top:318.6px;font-size:10.5px;line-height:10.5px;color:#1e2f6e;letter-spacing:0.466px;font-weight:bold;">USAID</div>
<div class="a" style="left:131.0px;top:314.5px;width:26.0px;height:13.5px;background:#f6ecd0;"></div>
<svg class="a" style="left:131.0px;top:314.0px;" width="26" height="14" viewBox="0 0 26 14"><circle cx="8" cy="7" r="4" fill="none" stroke="#6fb5d8" stroke-width="1.500"/><rect x="13" y="7" width="10" height="4" fill="#f0c850"/></svg>
<div class="a" style="left:163.0px;top:314.5px;width:35.0px;height:14.5px;background:#3f86cf;"></div>
<div class="a" style="left:168.0px;top:320.3px;font-size:5.5px;line-height:5.5px;color:#cfe2f5;letter-spacing:0.088px;">DOBRE</div>
<div class="a" style="left:211.0px;top:312.0px;width:39.0px;height:20.5px;background:#ffffff;"></div>
<svg class="a" style="left:211.0px;top:312.0px;" width="40" height="21" viewBox="0 0 40 21"><circle cx="8.500" cy="10" r="4" fill="none" stroke="#3f9b57" stroke-width="2"/></svg>
<div class="a" style="left:224.0px;top:317.7px;font-size:4.5px;line-height:4.5px;color:#3a4a5a;letter-spacing:-0.167px;font-weight:bold;">Global</div>
<div class="a" style="left:224.0px;top:322.7px;font-size:4.5px;line-height:4.5px;color:#3a4a5a;letter-spacing:-0.409px;font-weight:bold;">Communities</div>
<div class="a" style="left:9.0px;top:166.9px;font-size:15.5px;line-height:15.5px;color:#444;letter-spacing:0.000px;">1</div>
<div class="a" style="left:32.0px;top:360.0px;width:228.0px;height:171.0px;background:#ffffff;border:1px solid #d0d0d0;"></div>
<div class="a" style="left:-82.05px;top:326.62px;width:1915px;height:1035px;transform:scale(0.2074,0.2058);transform-origin:0 0;"><div class="a" style="left:574.0px;top:187.0px;width:1051.0px;height:161.0px;background:#d0533b;"></div>
<div class="a" style="left:574.0px;top:364.0px;width:1053.0px;height:601.0px;background:#f3f2df;"></div>
<svg class="a" style="left:0.0px;top:0.0px;" width="1915" height="1035" viewBox="0 0 1915 1035"><path d="M609.500 386.500A352 352 0 0 1 609.500 885.500" fill="none" stroke="#c44a33" stroke-width="4"/></svg>
<div class="a" style="left:662.0px;top:413.0px;width:933.0px;height:84.0px;background:#fffdfb;border:4px solid #c44a33;"></div>
<div class="a" style="left:708.0px;top:534.2px;width:887.0px;height:84.0px;background:#fffdfb;border:4px solid #c44a33;"></div>
<div class="a" style="left:708.0px;top:655.2px;width:887.0px;height:84.0px;background:#fffdfb;border:4px solid #c44a33;"></div>
<div class="a" style="left:662.0px;top:776.8px;width:933.0px;height:84.0px;background:#fffdfb;border:4px solid #c44a33;"></div>
<svg class="a" style="left:0.0px;top:0.0px;" width="1915" height="1035" viewBox="0 0 1915 1035"><circle cx="659.5" cy="454.3" r="50" fill="#fff" stroke="#c44a33" stroke-width="4"/><circle cx="706.8" cy="575.8" r="50" fill="#fff" stroke="#c44a33" stroke-width="4"/><circle cx="706.8" cy="697.2" r="50" fill="#fff" stroke="#c44a33" stroke-width="4"/><circle cx="659.5" cy="818.5" r="50" fill="#fff" stroke="#c44a33" stroke-width="4"/></svg>
<div class="a" style="left:640.0px;top:254.2px;font-size:47px;line-height:47px;color:#fff;letter-spacing:-0.256px;font-weight:bold;">ПРО ІНДЕКС БЮДЖЕТНОЇ ПРОЗОРОСТІ</div>
<div class="a" style="left:725.0px;top:426.4px;font-size:27px;line-height:27px;color:#c44a33;letter-spacing:-0.091px;font-weight:bold;-webkit-text-stroke:1.6px #c44a33;">Перше комплексне Національне оцінювання рівня</div>
<div class="a" style="left:725.0px;top:457.4px;font-size:27px;line-height:27px;color:#c44a33;letter-spacing:-0.516px;font-weight:bold;-webkit-text-stroke:1.6px #c44a33;">прозорості бюджетного процесу, бюджетний «Оскар»</div>
<div class="a" style="left:771.0px;top:547.6px;font-size:27px;line-height:27px;color:#c44a33;letter-spacing:1.089px;font-weight:bold;-webkit-text-stroke:1.6px #c44a33;">Унікальна інноваційна Методологія оцінювання та</div>
<div class="a" style="left:771.0px;top:578.6px;font-size:27px;line-height:27px;color:#c44a33;letter-spacing:1.542px;font-weight:bold;-webkit-text-stroke:1.6px #c44a33;">онлайн-платформа www.tlb.in.ua з усіма результатами</div>
<div class="a" style="left:771.0px;top:668.6px;font-size:27px;line-height:27px;color:#c44a33;letter-spacing:0.841px;font-weight:bold;-webkit-text-stroke:1.6px #c44a33;">В 2021 році оцінювання пройшли 100 ТГ, з них повторно -</div>
<div class="a" style="left:771.0px;top:699.6px;font-size:27px;line-height:27px;color:#c44a33;letter-spacing:-3.017px;font-weight:bold;-webkit-text-stroke:1.6px #c44a33;">75</div>
<div class="a" style="left:725.0px;top:790.1px;font-size:27px;line-height:27px;color:#c44a33;letter-spacing:0.966px;font-weight:bold;-webkit-text-stroke:1.6px #c44a33;">22 експерти Громадського Партнерства «За прозорі місцеві</div>
<div class="a" style="left:725.0px;top:821.1px;font-size:27px;line-height:27px;color:#c44a33;letter-spacing:-0.977px;font-weight:bold;-webkit-text-stroke:1.6px #c44a33;">бюджети!»</div>
<div class="a" style="left:1036.0px;top:580.0px;width:214.0px;height:26.0px;background:#fffdfb;"></div>
<div class="a" style="left:1040.0px;top:578.4px;font-size:27px;line-height:27px;color:#0a0ae6;letter-spacing:2.462px;font-weight:bold;-webkit-text-stroke:1.6px #0a0ae6;">www.tlb.in.ua</div>
<div class="a" style="left:1038.0px;top:606.0px;width:212.0px;height:4.0px;background:#0a0ae6;"></div>
</div>
<div class="a" style="left:9.0px;top:358.4px;font-size:15.5px;line-height:15.5px;color:#444;letter-spacing:0.000px;">2</div>
<div class="a" style="left:29.0px;top:548.0px;width:234.0px;height:177.0px;background:#ffffff;border:3px solid #7a1015;"></div>
<div class="a" style="left:-82.05px;top:517.32px;width:1915px;height:1035px;transform:scale(0.2074,0.2058);transform-origin:0 0;"><div class="a" style="left:574.0px;top:187.0px;width:1051.0px;height:161.0px;background:#d0533b;"></div>
<div class="a" style="left:574.0px;top:364.0px;width:1053.0px;height:601.0px;background:#f3f2df;"></div>
<svg class="a" style="left:0.0px;top:0.0px;" width="1915" height="1035" viewBox="0 0 1915 1035"><path d="M609.500 386.500A352 352 0 0 1 609.500 885.500" fill="none" stroke="#596574" stroke-width="5"/></svg>
<div class="a" style="left:662.0px;top:402.0px;width:933.0px;height:106.0px;background:#736057;box-shadow:0 0 0 1.500px #fdfdf6;"></div>
<div class="a" style="left:708.0px;top:523.0px;width:887.0px;height:106.0px;background:#616d51;box-shadow:0 0 0 1.500px #fdfdf6;"></div>
<div class="a" style="left:708.0px;top:644.0px;width:887.0px;height:106.0px;background:#4f6c5a;box-shadow:0 0 0 1.500px #fdfdf6;"></div>
<div class="a" style="left:662.0px;top:765.0px;width:933.0px;height:107.0px;background:#4c596a;box-shadow:0 0 0 1.500px #fdfdf6;"></div>
<svg class="a" style="left:0.0px;top:0.0px;" width="1915" height="1035" viewBox="0 0 1915 1035"><circle cx="659.5" cy="454.3" r="50" fill="#fff" stroke="#5e4f48" stroke-width="4.5"/><circle cx="706.8" cy="575.8" r="50" fill="#fff" stroke="#556048" stroke-width="4.5"/><circle cx="706.8" cy="697.2" r="50" fill="#fff" stroke="#45604f" stroke-width="4.5"/><circle cx="659.5" cy="818.5" r="50" fill="#fff" stroke="#444f5f" stroke-width="4.5"/></svg>
<div class="a" style="left:874.0px;top:254.0px;font-size:45.5px;line-height:45.5px;color:#fff;letter-spacing:5.327px;font-weight:bold;-webkit-text-stroke:1.7px #fff;transform:scaleX(0.86);transform-origin:0 0;"><u>ПРО</u> ПАРТНЕРСТВО</div>
<div class="a" style="left:725.5px;top:442.7px;font-size:23.2px;line-height:23.2px;color:#fff;letter-spacing:0.780px;font-weight:bold;-webkit-text-stroke:1.7px #fff;">39 <u>громадських</u> <u>організацій</u> <u>та</u> ЗМІ <u>з</u> 17 <u>областей</u> <u>України</u></div>
<div class="a" style="left:771.5px;top:535.7px;font-size:23.2px;line-height:23.2px;color:#fff;letter-spacing:0.623px;font-weight:bold;-webkit-text-stroke:1.7px #fff;"><u>Єдина</u> в <u>Україні</u> мережа НУО та ЗМІ, яка <u>фокусується</u> <u>саме</u> на</div>
<div class="a" style="left:771.5px;top:563.5px;font-size:23.2px;line-height:23.2px;color:#fff;letter-spacing:0.399px;font-weight:bold;-webkit-text-stroke:1.7px #fff;"><u>підвищенні</u> <u>доброчесності</u>, <u>ефективності</u> та <u>прозорості</u> бюджетного</div>
<div class="a" style="left:771.5px;top:591.2px;font-size:23.2px;line-height:23.2px;color:#fff;letter-spacing:0.601px;font-weight:bold;-webkit-text-stroke:1.7px #fff;"><u>процесу</u> на <u>місцевому</u> <u>рівні</u></div>
<div class="a" style="left:771.5px;top:657.9px;font-size:23.2px;line-height:23.2px;color:#fff;letter-spacing:0.330px;font-weight:bold;-webkit-text-stroke:1.7px #fff;"><u>Інноваційні</u> <u>підходи</u> та <u>унікальні</u> <u>продукти</u>: <u>Методологія</u> <u>оцінювання</u></div>
<div class="a" style="left:771.5px;top:685.8px;font-size:23.2px;line-height:23.2px;color:#fff;letter-spacing:0.345px;font-weight:bold;-webkit-text-stroke:1.7px #fff;"><u>прозорості</u>, <u>Бюджети</u> для <u>громадян</u>, <u>Антикорупційні</u> <u>інструменти</u>,</div>
<div class="a" style="left:771.5px;top:713.5px;font-size:23.2px;line-height:23.2px;color:#fff;letter-spacing:0.342px;font-weight:bold;-webkit-text-stroke:1.7px #fff;"><u>акція</u> «<u>Впливай</u> на бюджет <u>своєї</u> <u>громади</u>!»</div>
<div class="a" style="left:725.5px;top:806.4px;font-size:23.2px;line-height:23.2px;color:#fff;letter-spacing:0.557px;font-weight:bold;-webkit-text-stroke:1.7px #fff;"><u>Реальні</u> <u>зміни</u> та <u>досягнення</u> в <u>містах</u> та громадах</div>
</div>
<div class="a" style="left:9.0px;top:549.2px;font-size:15.5px;line-height:15.5px;color:#c8431f;letter-spacing:0.000px;">3</div>
<div class="a" style="left:32.0px;top:742.5px;width:228.0px;height:170.5px;background:#ffffff;border:1px solid #d0d0d0;"></div>
<div class="a" style="left:-82.05px;top:708.62px;width:1915px;height:1035px;transform:scale(0.2074,0.2058);transform-origin:0 0;"><div class="a" style="left:574.0px;top:187.0px;width:1051.0px;height:161.0px;background:#d0533b;"></div>
<div class="a" style="left:574.0px;top:364.0px;width:1053.0px;height:601.0px;background:#f3f2df;"></div>
<svg class="a" style="left:0.0px;top:0.0px;" width="1915" height="1035" viewBox="0 0 1915 1035"><path d="M609.500 386.500A352 352 0 0 1 609.500 885.500" fill="none" stroke="#3a3a3a" stroke-width="4"/></svg>
<div class="a" style="left:662.0px;top:402.0px;width:933.0px;height:106.0px;background:#b2bbc8;"></div>
<div class="a" style="left:708.0px;top:523.5px;width:887.0px;height:105.5px;background:#b2bbc8;"></div>
<div class="a" style="left:708.0px;top:644.5px;width:887.0px;height:105.5px;background:#b2bbc8;"></div>
<div class="a" style="left:662.0px;top:765.5px;width:933.0px;height:106.5px;background:#b2bbc8;"></div>
<svg class="a" style="left:0.0px;top:0.0px;" width="1915" height="1035" viewBox="0 0 1915 1035"><circle cx="659.5" cy="454.3" r="50" fill="#fff" stroke="#3a3a3a" stroke-width="4"/><circle cx="706.8" cy="575.8" r="50" fill="#fff" stroke="#3a3a3a" stroke-width="4"/><circle cx="706.8" cy="697.2" r="50" fill="#fff" stroke="#3a3a3a" stroke-width="4"/><circle cx="659.5" cy="818.5" r="50" fill="#fff" stroke="#3a3a3a" stroke-width="4"/></svg>
<div class="a" style="left:866.0px;top:254.2px;font-size:47px;line-height:47px;color:#fff;letter-spacing:-0.779px;font-weight:bold;">ПРО МЕТОДОЛОГІЮ</div>
<div class="a" style="left:725.0px;top:412.3px;font-size:24px;line-height:24px;color:#10151c;letter-spacing:3.092px;-webkit-text-stroke:0.9px #10151c;">Методологія не має аналогів в Україні та фактично</div>
<div class="a" style="left:725.0px;top:443.3px;font-size:24px;line-height:24px;color:#10151c;letter-spacing:3.169px;-webkit-text-stroke:0.9px #10151c;">виступає інструментом просування «ідеальної картинки»</div>
<div class="a" style="left:725.0px;top:474.3px;font-size:24px;line-height:24px;color:#10151c;letter-spacing:3.422px;-webkit-text-stroke:0.9px #10151c;">прозорості місцевих бюджетів у майбутньому</div>
<div class="a" style="left:771.0px;top:564.6px;font-size:24px;line-height:24px;color:#10151c;letter-spacing:3.447px;-webkit-text-stroke:0.9px #10151c;">Охоплює всі 5 стадій бюджетного процесу</div>
<div class="a" style="left:771.0px;top:670.1px;font-size:24px;line-height:24px;color:#10151c;letter-spacing:3.360px;-webkit-text-stroke:0.9px #10151c;">Три параметри: відкритість інформації, прозорість</div>
<div class="a" style="left:771.0px;top:701.1px;font-size:24px;line-height:24px;color:#10151c;letter-spacing:3.540px;-webkit-text-stroke:0.9px #10151c;">рішень, використання інноваційних практик</div>
<div class="a" style="left:725.0px;top:791.6px;font-size:24px;line-height:24px;color:#10151c;letter-spacing:3.368px;-webkit-text-stroke:0.9px #10151c;">173 критерії, кожен оцінюється від 0 до 1, всі оцінки</div>
<div class="a" style="left:725.0px;top:822.6px;font-size:24px;line-height:24px;color:#10151c;letter-spacing:3.498px;-webkit-text-stroke:0.9px #10151c;">повністю верифіковані</div>
</div>
<div class="a" style="left:9.0px;top:740.4px;font-size:15.5px;line-height:15.5px;color:#444;letter-spacing:0.000px;">4</div>
<div class="a" style="left:32.0px;top:933.5px;width:228.0px;height:77.5px;background:#ffffff;border:1px solid #d0d0d0;border-bottom:0;"></div>
<div class="a" style="left:0;top:930px;width:300px;height:81px;overflow:hidden"><div class="a" style="left:-82.05px;top:-30.48px;width:1915px;height:1035px;transform:scale(0.2074,0.2058);transform-origin:0 0;"><div class="a" style="left:574.0px;top:187.0px;width:1051.0px;height:161.0px;background:#d0533b;"></div>
<div class="a" style="left:574.0px;top:364.0px;width:1053.0px;height:601.0px;background:#f3f2df;"></div>
<div class="a" style="left:866.0px;top:254.2px;font-size:47px;line-height:47px;color:#fff;letter-spacing:-0.779px;font-weight:bold;">ПРО МЕТОДОЛОГІЮ</div>
<div class="a" style="left:600.0px;top:378.0px;width:997.0px;height:74.0px;background:#8d9f93;"></div>
<div class="a" style="left:798.0px;top:378.0px;width:4.0px;height:74.0px;background:#a9b6ac;"></div>
<div class="a" style="left:1207.0px;top:378.0px;width:4.0px;height:74.0px;background:#a9b6ac;"></div>
<div class="a" style="left:600.0px;top:454.0px;width:997.0px;height:42.0px;background:#e2e3e1;"></div>
<div class="a" style="left:600.0px;top:498.0px;width:997.0px;height:47.0px;background:#eff0ec;"></div>
<div class="a" style="left:612.0px;top:392.2px;font-size:21px;line-height:21px;color:#1d2530;letter-spacing:3.644px;-webkit-text-stroke:.8px #1d2530;">Параметр</div>
<div class="a" style="left:815.0px;top:392.2px;font-size:21px;line-height:21px;color:#1d2530;letter-spacing:4.260px;-webkit-text-stroke:.8px #1d2530;">Максимально незважена</div>
<div class="a" style="left:815.0px;top:422.2px;font-size:21px;line-height:21px;color:#1d2530;letter-spacing:4.032px;-webkit-text-stroke:.8px #1d2530;">сума балів за параметром</div>
<div class="a" style="left:1225.0px;top:392.2px;font-size:21px;line-height:21px;color:#1d2530;letter-spacing:4.173px;-webkit-text-stroke:.8px #1d2530;">Максимально зважена</div>
<div class="a" style="left:1225.0px;top:422.2px;font-size:21px;line-height:21px;color:#1d2530;letter-spacing:3.974px;-webkit-text-stroke:.8px #1d2530;">оцінка за параметром</div>
<div class="a" style="left:612.0px;top:468.8px;font-size:18px;line-height:18px;color:#111;letter-spacing:2.163px;font-weight:bold;-webkit-text-stroke:1px #111;">Відкритість</div>
<div class="a" style="left:992.0px;top:468.8px;font-size:18px;line-height:18px;color:#111;letter-spacing:2.989px;font-weight:bold;-webkit-text-stroke:1px #111;">77</div>
<div class="a" style="left:1392.0px;top:468.8px;font-size:18px;line-height:18px;color:#111;letter-spacing:3.989px;font-weight:bold;-webkit-text-stroke:1px #111;">45</div>
<div class="a" style="left:612.0px;top:513.8px;font-size:18px;line-height:18px;color:#111;letter-spacing:2.793px;font-weight:bold;-webkit-text-stroke:1px #111;">Прозорість</div>
<div class="a" style="left:992.0px;top:513.8px;font-size:18px;line-height:18px;color:#111;letter-spacing:2.989px;font-weight:bold;-webkit-text-stroke:1px #111;">53</div>
<div class="a" style="left:1392.0px;top:513.8px;font-size:18px;line-height:18px;color:#111;letter-spacing:3.989px;font-weight:bold;-webkit-text-stroke:1px #111;">30</div>
</div>
</div>
<div class="a" style="left:9.0px;top:931.3px;font-size:15.5px;line-height:15.5px;color:#444;letter-spacing:0.000px;">5</div>
<!-- p_slide -->
<div class="a" style="left:555.0px;top:168.0px;width:1092.0px;height:820.0px;background:#ffffff;border:1px solid #c6c6c6;"></div>
<div class="a" style="left:574.0px;top:187.0px;width:1051.0px;height:161.0px;background:#d0533b;"></div>
<div class="a" style="left:574.0px;top:364.0px;width:1053.0px;height:601.0px;background:#f3f2df;"></div>
<svg class="a" style="left:0.0px;top:0.0px;" width="1915" height="1035" viewBox="0 0 1915 1035"><path d="M609.500 386.500A352 352 0 0 1 609.500 885.500" fill="none" stroke="#596574" stroke-width="3.2"/><path d="M609.500 386.500A352 352 0 0 1 609.500 885.500" fill="none" stroke="#b9c0c8" stroke-width="1"/></svg>
<div class="a" style="left:662.0px;top:402.0px;width:933.0px;height:106.0px;background:#736057;box-shadow:0 0 0 1.500px #fdfdf6;"></div>
<div class="a" style="left:708.0px;top:523.0px;width:887.0px;height:106.0px;background:#616d51;box-shadow:0 0 0 1.500px #fdfdf6;"></div>
<div class="a" style="left:708.0px;top:644.0px;width:887.0px;height:106.0px;background:#4f6c5a;box-shadow:0 0 0 1.500px #fdfdf6;"></div>
<div class="a" style="left:662.0px;top:765.0px;width:933.0px;height:107.0px;background:#4c596a;box-shadow:0 0 0 1.500px #fdfdf6;"></div>
<svg class="a" style="left:0.0px;top:0.0px;" width="1915" height="1035" viewBox="0 0 1915 1035"><circle cx="659.5" cy="454.3" r="50" fill="#fff" stroke="#5e4f48" stroke-width="1.6"/><circle cx="706.8" cy="575.8" r="50" fill="#fff" stroke="#556048" stroke-width="1.6"/><circle cx="706.8" cy="697.2" r="50" fill="#fff" stroke="#45604f" stroke-width="1.6"/><circle cx="659.5" cy="818.5" r="50" fill="#fff" stroke="#444f5f" stroke-width="1.6"/></svg>
<div class="a" style="left:874.0px;top:254.0px;font-size:45.5px;line-height:45.5px;color:#fff;letter-spacing:5.327px;font-weight:bold;text-shadow:1px 1px 1.500px rgba(0,0,0,.45);-webkit-text-stroke:0.8px #fff;transform:scaleX(0.86);transform-origin:0 0;"><u>ПРО</u> ПАРТНЕРСТВО</div>
<div class="a" style="left:725.5px;top:442.7px;font-size:23.2px;line-height:23.2px;color:#fff;letter-spacing:0.780px;font-weight:bold;text-shadow:1px 1px 1.500px rgba(0,0,0,.45);-webkit-text-stroke:0.5px #fff;">39 <u>громадських</u> <u>організацій</u> <u>та</u> ЗМІ <u>з</u> 17 <u>областей</u> <u>України</u></div>
<div class="a" style="left:771.5px;top:535.7px;font-size:23.2px;line-height:23.2px;color:#fff;letter-spacing:0.623px;font-weight:bold;text-shadow:1px 1px 1.500px rgba(0,0,0,.45);-webkit-text-stroke:0.5px #fff;"><u>Єдина</u> в <u>Україні</u> мережа НУО та ЗМІ, яка <u>фокусується</u> <u>саме</u> на</div>
<div class="a" style="left:771.5px;top:563.5px;font-size:23.2px;line-height:23.2px;color:#fff;letter-spacing:0.399px;font-weight:bold;text-shadow:1px 1px 1.500px rgba(0,0,0,.45);-webkit-text-stroke:0.5px #fff;"><u>підвищенні</u> <u>доброчесності</u>, <u>ефективності</u> та <u>прозорості</u> бюджетного</div>
<div class="a" style="left:771.5px;top:591.2px;font-size:23.2px;line-height:23.2px;color:#fff;letter-spacing:0.601px;font-weight:bold;text-shadow:1px 1px 1.500px rgba(0,0,0,.45);-webkit-text-stroke:0.5px #fff;"><u>процесу</u> на <u>місцевому</u> <u>рівні</u></div>
<div class="a" style="left:771.5px;top:657.9px;font-size:23.2px;line-height:23.2px;color:#fff;letter-spacing:0.330px;font-weight:bold;text-shadow:1px 1px 1.500px rgba(0,0,0,.45);-webkit-text-stroke:0.5px #fff;"><u>Інноваційні</u> <u>підходи</u> та <u>унікальні</u> <u>продукти</u>: <u>Методологія</u> <u>оцінювання</u></div>
<div class="a" style="left:771.5px;top:685.8px;font-size:23.2px;line-height:23.2px;color:#fff;letter-spacing:0.345px;font-weight:bold;text-shadow:1px 1px 1.500px rgba(0,0,0,.45);-webkit-text-stroke:0.5px #fff;"><u>прозорості</u>, <u>Бюджети</u> для <u>громадян</u>, <u>Антикорупційні</u> <u>інструменти</u>,</div>
<div class="a" style="left:771.5px;top:713.5px;font-size:23.2px;line-height:23.2px;color:#fff;letter-spacing:0.342px;font-weight:bold;text-shadow:1px 1px 1.500px rgba(0,0,0,.45);-webkit-text-stroke:0.5px #fff;"><u>акція</u> «<u>Впливай</u> на бюджет <u>своєї</u> <u>громади</u>!»</div>
<div class="a" style="left:725.5px;top:806.4px;font-size:23.2px;line-height:23.2px;color:#fff;letter-spacing:0.557px;font-weight:bold;text-shadow:1px 1px 1.500px rgba(0,0,0,.45);-webkit-text-stroke:0.5px #fff;"><u>Реальні</u> <u>зміни</u> та <u>досягнення</u> в <u>містах</u> та громадах</div>
<!-- p_zoom -->
<div class="a" style="left:1901.0px;top:152.0px;width:14.0px;height:857.0px;background:#dcdcdc;"></div>
<div class="a" style="left:1901.0px;top:152.0px;width:14.0px;height:14.0px;background:#ffffff;border:1px solid #c6c6c6;"></div>
<div class="a" style="left:1901.0px;top:937.0px;width:14.0px;height:14.0px;background:#ffffff;border:1px solid #c6c6c6;"></div>
<div class="a" style="left:1901.0px;top:951.0px;width:14.0px;height:58.0px;background:#e6e6e6;"></div>
<svg class="a" style="left:1901.0px;top:150.0px;" width="14" height="860" viewBox="0 0 14 860"><g fill="#6a6a6a"><path d="M4 10.500h6l-3-3.500z"/><path d="M4 792.500h6l-3 3.500z"/><path d="M4 810h6l-3-3.500zM4 813.500h6l-3-3.500z"/><path d="M4 825h6l-3 3.500zM4 828.500h6l-3 3.500z"/></g></svg>
<div class="a" style="left:1678.0px;top:156.0px;width:230.0px;height:516.0px;background:#1f1f1f;border-radius:3px;box-shadow:0 1px 6px 1px rgba(0,0,0,.35);"></div>
<div class="a" style="left:1680.0px;top:158.0px;width:226.0px;height:129.0px;background:#b2d65e;"></div>
<svg class="a" style="left:1682.0px;top:160.0px;overflow:hidden;" width="222" height="125" viewBox="0 0 222 125"><defs><filter id="b1" x="-20%" y="-20%" width="140%" height="140%"><feGaussianBlur stdDeviation="1.300"/></filter><filter id="b1s"><feGaussianBlur stdDeviation=".700"/></filter>
<linearGradient id="w1" x1="0" x2="1" y1="0" y2="0"><stop offset="0" stop-color="#ebe9ed"/><stop offset=".45" stop-color="#e3e0e5"/><stop offset="1" stop-color="#dbd4d8"/></linearGradient>
<radialGradient id="f1" cx=".45" cy=".4" r=".7"><stop offset="0" stop-color="#d8b6a6"/><stop offset=".7" stop-color="#c9a392"/><stop offset="1" stop-color="#b48a7a"/></radialGradient>
<pattern id="dots" width="3.400" height="3.400" patternUnits="userSpaceOnUse"><circle cx="1" cy="1" r=".750" fill="#c9d0e2"/></pattern></defs>
<rect width="222" height="125" fill="url(#w1)"/>
<g filter="url(#b1)">
<path d="M96 80C88 60 88 30 94 12C100 -6 134 -8 146 4C156 14 160 40 164 58C168 76 172 92 172 125H110z" fill="#2a2126"/>
<path d="M38 125C44 104 58 88 76 80L104 71L142 74C170 78 194 86 206 100L214 125z" fill="#3b4766"/>
<ellipse cx="122" cy="45" rx="25.500" ry="34" fill="url(#f1)"/>
<path d="M103 70C112 84 134 84 144 72L148 96H100z" fill="#15151a"/>
<path d="M95 46C94 22 106 8 124 9C140 10 149 24 149 46C153 22 144 2 124 1C102 0 92 20 95 46z" fill="#2a2126"/>
<path d="M146 40C152 60 150 80 158 100L172 110L170 70z" fill="#2a2126"/>
</g>
<path d="M38 125C44 104 58 88 76 80L102 72L100 96L112 125zM146 76C170 78 194 86 206 100L214 125H140l8-28z" fill="url(#dots)" opacity=".75"/>
<g filter="url(#b1s)"><path d="M108 37.500c3-1.500 7-1.500 10 0M128 36.500c3-1.500 7-1.500 10 0" stroke="#4a3530" stroke-width="2.400" fill="none"/><ellipse cx="114" cy="41" rx="3" ry="1.400" fill="#5a4038"/><ellipse cx="133" cy="40" rx="3" ry="1.400" fill="#5a4038"/><path d="M124 44v10l-3 3" stroke="#b58a7a" stroke-width="1.500" fill="none"/><path d="M116 65c4 2 10 2 14 0" stroke="#a8706a" stroke-width="2.200" fill="none"/>
<path d="M52 103l8-7l8 7l8-7l8 7l8-7l8 7M146 102l9-6l9 6l9-6l9 6l9-5l9 6" stroke="#e8ecf4" stroke-width="3" fill="none" opacity=".85"/>
<path d="M122 82l6 14l-4 10M144 72l-6 20l-14 14" stroke="#d8d4b8" stroke-width=".9" fill="none"/></g>
</svg>
<div class="a" style="left:1682.0px;top:266.0px;width:222.0px;height:19.0px;background:rgba(40,40,40,.72);"></div>
<div class="a" style="left:1685.5px;top:270.8px;font-size:12px;line-height:12px;color:#fff;letter-spacing:0.423px;">Тетяна Романова, Громадське пар...</div>
<svg class="a" style="left:1681.0px;top:287.0px;overflow:hidden;" width="225" height="127" viewBox="0 0 225 127"><defs><filter id="b2" x="-20%" y="-20%" width="140%" height="140%"><feGaussianBlur stdDeviation="1.500"/></filter><filter id="b2s"><feGaussianBlur stdDeviation=".800"/></filter>
<linearGradient id="w2" x1="0" x2="1" y1="0" y2="0"><stop offset="0" stop-color="#c98488"/><stop offset=".55" stop-color="#cd8083"/><stop offset="1" stop-color="#c47478"/></linearGradient></defs>
<rect width="225" height="127" fill="url(#w2)"/>
<g filter="url(#b2)">
<path d="M0 127V75C-2 40 8 8 42 4C70 2 82 20 84 48L80 127z" fill="#6d655c"/>
<path d="M0 127V85l20-10l60 0c18 6 28 20 32 52z" fill="#8d9597"/>
<path d="M12 50C10 25 28 12 46 14C64 16 72 32 70 58C68 84 58 100 42 102C24 102 14 80 12 50z" fill="#dcaa94"/>
<path d="M36 100l28-6l-4 33h-26z" fill="#d4a08b"/>
<path d="M74 78l10 0l4 30l-14 19z" fill="#5a3a34"/>
<path d="M0 18c4 -6 8 -4 8 6l-2 50h-6z" fill="#7a8a5a"/>
<path d="M10 40C10 16 26 6 44 8C62 10 72 24 72 44C66 26 56 18 42 18C26 18 14 26 10 40z" fill="#6d655c"/>
<path d="M36 96c6 8 22 8 28 2l2 12h-30z" fill="#dba590"/>
</g>
<g filter="url(#b2s)" fill="none"><path d="M20 47c4-2 8-2 12 0M44 46c4-2 9-2 13 0" stroke="#7a5a48" stroke-width="1.800"/><path d="M21 54c3 1.500 7 1.500 10 0M45 53c3 1.500 7 1.500 11 0" stroke="#5a4034" stroke-width="1.600"/><path d="M37 54c-1 6-3 10-4 13l5 1" stroke="#c08a76" stroke-width="1.500"/><path d="M30 80c4 1.500 9 1.500 13 0" stroke="#b8706a" stroke-width="2"/></g>
<g filter="url(#b2s)">
<path d="M112 0h30v12l-15 8l-15-8z" fill="#1e2d5c"/><path d="M119 3h16l-8 10z" fill="#dfe4ee"/>
<rect x="115.500" y="22.500" width="23" height="15" fill="#d8cfcf" stroke="#5a4444" stroke-width="1.200"/>
<rect x="152" y="40" width="60" height="26" fill="#8a5a4a"/>
<path d="M154 64v-18h6v18M164 64v-22h6v22M175 64v-20h6v20M186 64v-24h5v24M198 64v-22h7v22" stroke="#3a2a22" stroke-width="4.500" fill="none"/><path d="M157 60v-12M167 58v-14M178 60v-12M188.500 58v-16M201.500 58v-10" stroke="#e6c890" stroke-width="2" fill="none"/>
<circle cx="201" cy="42" r="5" fill="#c23a34"/>
<rect x="150" y="66" width="70" height="27" fill="#c9d2d6" stroke="#e8e8e8" stroke-width="1"/>
<rect x="153" y="72" width="34" height="16" fill="#8a9690"/><rect x="189" y="69" width="30" height="22" fill="#5a8a78"/><ellipse cx="207" cy="80" rx="10" ry="5" fill="#2a4a3a"/>
<rect x="100" y="88" width="30" height="24" fill="#bdb8b0" stroke="#e0dcd4" stroke-width="1.500"/><rect x="105" y="97" width="20" height="12" fill="#7a746c"/>
<rect x="131" y="100" width="20" height="14" fill="#e6dccc"/><rect x="154" y="103" width="12" height="12" fill="#d8d4c4"/>
<circle cx="172" cy="110" r="8" fill="#e2c8c0"/><circle cx="186" cy="109" r="8" fill="#b8403a"/><circle cx="186" cy="109" r="4" fill="#e8d8d0"/>
<path d="M196 127l4-22l14-8l11 4v26z" fill="#1c2024"/>
</g></svg>
<div class="a" style="left:1681.0px;top:394.5px;width:166.0px;height:19.5px;background:rgba(40,40,40,.72);"></div>
<div class="a" style="left:1685.0px;top:398.8px;font-size:12px;line-height:12px;color:#fff;letter-spacing:0.454px;">Дмитрівська сільська рада</div>
<svg class="a" style="left:1681.0px;top:415.0px;overflow:hidden;" width="225" height="126" viewBox="0 0 225 126"><defs><filter id="b3" x="-20%" y="-20%" width="140%" height="140%"><feGaussianBlur stdDeviation="2"/></filter><filter id="b3s"><feGaussianBlur stdDeviation="1"/></filter>
<linearGradient id="w3" x1="0" x2="1" y1="0" y2="0"><stop offset="0" stop-color="#c9c5ae"/><stop offset=".1" stop-color="#dedbc8"/><stop offset=".5" stop-color="#d6d3be"/><stop offset="1" stop-color="#cbc8b0"/></linearGradient></defs>
<rect width="225" height="126" fill="url(#w3)"/>
<g filter="url(#b3s)">
<rect x="44" y="0" width="10" height="60" fill="#f4f4f0"/><rect x="54" y="0" width="22" height="70" fill="#9a9c98"/><path d="M58 0l10 0l4 60l-16 4z" fill="#5f625c"/>
<rect x="77" y="0" width="16" height="126" fill="#d2cfba"/><rect x="93" y="0" width="10" height="100" fill="#ecebe4"/><rect x="98" y="20" width="4" height="50" fill="#a8aaa2"/>
<rect x="112" y="0" width="9" height="110" fill="#f2f1ea"/><rect x="133" y="0" width="5" height="110" fill="#f4f4ee"/><rect x="135" y="40" width="3" height="60" fill="#b8b8ac"/>
<rect x="152" y="0" width="4" height="60" fill="#eceadf"/><rect x="171" y="0" width="3" height="126" fill="#b9b69e"/><rect x="190" y="0" width="3" height="126" fill="#bcb9a2"/><rect x="208" y="0" width="3" height="126" fill="#b5b29a"/>
<rect x="20" y="0" width="3" height="126" fill="#bdb9a0"/><rect x="38" y="0" width="3" height="126" fill="#b9b59c"/>
<rect x="23" y="0" width="14" height="126" fill="#e3e0cf" opacity=".8"/><rect x="140" y="0" width="12" height="126" fill="#dddac6" opacity=".8"/><rect x="157" y="0" width="13" height="126" fill="#d9d6c1" opacity=".8"/><rect x="121" y="0" width="11" height="126" fill="#d9d6c2" opacity=".7"/>
<path d="M60 10l6 8l-5 10l7 12l-4 12" stroke="#4a4e48" stroke-width="5" fill="none"/>
</g>
<g filter="url(#b3)">
<path d="M28 126C22 95 28 66 52 58C78 50 98 62 104 85C108 100 112 112 112 126z" fill="#3c2518"/>
<path d="M40 126C38 100 50 84 70 84C88 84 96 100 96 126z" fill="#5a2c20"/>
<path d="M22 126v-18l90 0c40 -2 62 0 62 10v8z" fill="#1b1b1e"/>
<path d="M110 95c4 6 10 14 10 20" stroke="#6a5a30" stroke-width="3" fill="none"/>
</g></svg>
<div class="a" style="left:1681.0px;top:521.5px;width:96.0px;height:19.0px;background:rgba(40,40,40,.72);"></div>
<svg class="a" style="left:1684.5px;top:523.5px;" width="13" height="15" viewBox="0 0 13 15"><g fill="none" stroke="#f0434f" stroke-width="1.300"><rect x="4.300" y="1" width="4.400" height="8" rx="2.200" fill="#f0434f"/><path d="M2.200 7.500a4.300 4.300 0 0 0 8.600 0M6.500 11.800v2.200"/><path d="M11.500 1.500l-10 12.500" stroke-width="1.500"/></g></svg>
<div class="a" style="left:1703.6px;top:526.8px;font-size:12px;line-height:12px;color:#fff;letter-spacing:0.218px;">Александра</div>
<div class="a" style="left:1681.0px;top:541.0px;width:225.0px;height:129.0px;background:#222222;"></div>
<div class="a" style="left:1733.0px;top:599.4px;font-size:14.2px;line-height:14.2px;color:#fff;letter-spacing:0.438px;font-weight:bold;">Люда Чернікова</div>
<div class="a" style="left:1681.0px;top:649.0px;width:126.0px;height:21.5px;background:rgba(52,52,52,.9);"></div>
<svg class="a" style="left:1684.5px;top:652.0px;" width="13" height="15" viewBox="0 0 13 15"><g fill="none" stroke="#f0434f" stroke-width="1.300"><rect x="4.300" y="1" width="4.400" height="8" rx="2.200" fill="#f0434f"/><path d="M2.200 7.500a4.300 4.300 0 0 0 8.600 0M6.500 11.800v2.200"/><path d="M11.500 1.500l-10 12.500" stroke-width="1.500"/></g></svg>
<div class="a" style="left:1703.0px;top:654.4px;font-size:12px;line-height:12px;color:#fff;letter-spacing:0.769px;">Люда Чернікова</div>
<!-- p_status -->
<div class="a" style="left:300.0px;top:1008.0px;width:1615.0px;height:1.0px;background:#c8c8c8;"></div>
<div class="a" style="left:0.0px;top:1011.0px;width:1915.0px;height:1.0px;background:#d9d9d9;"></div>
<div class="a" style="left:0.0px;top:1012.0px;width:1915.0px;height:21.0px;background:#f3f3f3;"></div>
<div class="a" style="left:0.0px;top:1033.0px;width:45.0px;height:2.0px;background:#0f1a22;"></div>
<div class="a" style="left:45.0px;top:1033.0px;width:344.0px;height:2.0px;background:#fafafa;"></div>
<div class="a" style="left:389.0px;top:1033.0px;width:1526.0px;height:2.0px;background:#232c38;"></div>
<div class="a" style="left:5.7px;top:1016.8px;font-size:12px;line-height:12px;color:#444444;letter-spacing:-0.629px;">Слайд 3 из 13</div>
<svg class="a" style="left:94.0px;top:1014.0px;" width="18" height="15" viewBox="0 0 18 15"><g fill="none" stroke="#6a6a6a" stroke-width="1"><path d="M7.500 2.500c-2-1.200-4.500-1.200-6.500 0v9.500c2-1.200 4.500-1.200 6.500 0zM7.500 2.500c1-.6 2-.9 3-1M7.500 12v2.500"/><path d="M10.500 4l5 5M15.500 4l-5 5" stroke="#4a4a4a" stroke-width="1.200"/></g></svg>
<div class="a" style="left:127.6px;top:1016.8px;font-size:12px;line-height:12px;color:#444444;letter-spacing:-0.294px;">русский</div>
<svg class="a" style="left:183.0px;top:1013.0px;" width="18" height="18" viewBox="0 0 18 18"><g fill="none" stroke="#4a4a4a" stroke-width="1.200"><path d="M7.500 3.500a5 5 0 1 0 4 8" stroke-dasharray="2.500 1.500"/><path d="M7.500 1v6.500l3 0"/><path d="M9.500 9.500l6 6M15.500 9.500l-6 6" stroke-width="1.500"/></g></svg>
<div class="a" style="left:203.7px;top:1016.8px;font-size:12px;line-height:12px;color:#444444;letter-spacing:-0.247px;">Специальные возможности: про</div>
<div class="a" style="left:374.5px;top:1011.0px;width:326.5px;height:22.0px;background:#23d959;border-radius:3px 0 0 3px;"></div>
<div class="a" style="left:700.5px;top:1011.0px;width:190.5px;height:22.0px;background:#ff3b3b;border-radius:0 4px 4px 0;"></div>
<svg class="a" style="left:381.0px;top:1015.0px;" width="12" height="14" viewBox="0 0 12 14"><path d="M1.500 5.500l4.500-4.500v3c3 0 5 2.500 5 7c-1.200-2.500-2.800-3.500-5-3.500v3z" fill="#0c5a22" transform="rotate(-30 6 7)"/></svg>
<div class="a" style="left:427.3px;top:1017.7px;font-size:12.2px;line-height:12.2px;color:#0d3a1a;letter-spacing:-0.311px;font-weight:bold;">Вы запустили демонстрацию экрана</div>
<svg class="a" style="left:679.0px;top:1015.0px;" width="12" height="14" viewBox="0 0 12 14"><path d="M6 1l5 1.800v4c0 3.200-2.200 5.200-5 6.200c-2.800-1-5-3-5-6.200v-4z" fill="#0c5a22"/><path d="M3.500 6.800l2 2l3.200-3.600" stroke="#23d959" stroke-width="1.300" fill="none"/></svg>
<div class="a" style="left:708.0px;top:1018.5px;width:8.0px;height:8.0px;background:#ffffff;"></div>
<div class="a" style="left:724.6px;top:1017.7px;font-size:12.2px;line-height:12.2px;color:#ffffff;letter-spacing:-0.005px;">Остановить демонстрацию</div>
<svg class="a" style="left:1362.0px;top:1014.0px;" width="16" height="15" viewBox="0 0 16 15"><g fill="none" stroke="#6e6e6e" stroke-width="1.100"><path d="M2.500 6.500h10M2.500 9.500h10M2.500 12.500h10"/><path d="M5.500 3.500l2-2l2 2" /></g></svg>
<div class="a" style="left:1381.4px;top:1017.3px;font-size:12px;line-height:12px;color:#444444;letter-spacing:-0.328px;">Заметки</div>
<svg class="a" style="left:1444.0px;top:1014.0px;" width="16" height="15" viewBox="0 0 16 15"><path d="M1.500 1.500h13v8.500h-7l-3.500 3.500v-3.500h-2.500z" fill="#5e5e5e"/></svg>
<div class="a" style="left:1462.0px;top:1017.3px;font-size:12px;line-height:12px;color:#444444;letter-spacing:0.002px;">Примечания</div>
<div class="a" style="left:1550.0px;top:1011.0px;width:39.5px;height:22.0px;background:#c8c8c8;"></div>
<svg class="a" style="left:1562.0px;top:1014.0px;" width="18" height="16" viewBox="0 0 18 16"><g fill="none" stroke="#6e6e6e" stroke-width="1"><rect x=".5" y="1.500" width="16" height="12"/><path d="M4.500 1.500v12M4.500 10.500h12"/><rect x="7" y="4" width="7" height="4"/></g></svg>
<svg class="a" style="left:1602.0px;top:1014.0px;" width="17" height="16" viewBox="0 0 17 16"><g fill="none" stroke="#6e6e6e" stroke-width="1"><rect x=".5" y="1.500" width="5.500" height="4.500"/><rect x="9.500" y="1.500" width="5.500" height="4.500"/><rect x=".5" y="9.500" width="5.500" height="4.500"/><rect x="9.500" y="9.500" width="5.500" height="4.500"/></g></svg>
<svg class="a" style="left:1642.0px;top:1014.0px;" width="16" height="16" viewBox="0 0 16 16"><g fill="none" stroke="#6e6e6e" stroke-width="1"><path d="M7.500 3c-2-1.500-4.500-1.500-7 0v10c2.500-1.500 5-1.500 7 0c2-1.500 4.500-1.500 7 0v-10c-2.500-1.500-5-1.500-7 0zM7.500 3v10"/><path d="M2.500 5.500h3M2.500 7.500h3M2.500 9.500h3M9.500 5.500h3M9.500 7.500h3M9.500 9.500h3" stroke-width=".8"/></g></svg>
<svg class="a" style="left:1682.0px;top:1014.0px;" width="16" height="16" viewBox="0 0 16 16"><g fill="none" stroke="#6e6e6e" stroke-width="1"><path d="M.5 2.500h14M1.500 2.500v7h12v-7M7.500 9.500v3M4.500 14.500l3-2l3 2"/></g></svg>
<div class="a" style="left:1716.0px;top:1021.5px;width:7.0px;height:1.0px;background:#4a4a4a;"></div>
<div class="a" style="left:1729.0px;top:1021.5px;width:100.0px;height:1.0px;background:#6a6a6a;"></div>
<div class="a" style="left:1779.0px;top:1016.0px;width:4.5px;height:12.0px;background:#4a4a4a;"></div>
<div class="a" style="left:1834.0px;top:1021.5px;width:8.0px;height:1.0px;background:#4a4a4a;"></div>
<div class="a" style="left:1837.5px;top:1018.0px;width:1.0px;height:8.0px;background:#4a4a4a;"></div>
<div class="a" style="left:1855.0px;top:1017.3px;font-size:12px;line-height:12px;color:#444444;letter-spacing:-0.527px;">114 %</div>
<svg class="a" style="left:1898.0px;top:1015.0px;" width="14" height="14" viewBox="0 0 14 14"><g fill="none" stroke="#6e6e6e" stroke-width="1"><rect x=".5" y=".5" width="12" height="12"/><path d="M6.500 2v3M6.500 8v3M2 6.500h3M8 6.500h3M5 3.500l1.500-1.500l1.500 1.500M5 9.500l1.500 1.500l1.500-1.500M3.500 5l-1.500 1.500l1.500 1.500M9.500 5l1.500 1.500l-1.500 1.500" stroke-width=".8"/></g></svg>

</div>
</body>
</html>
